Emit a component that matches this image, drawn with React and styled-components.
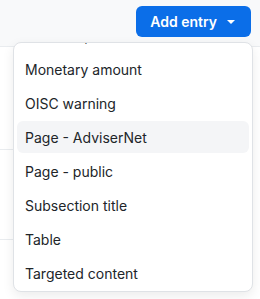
import React, { useEffect, useRef } from "react";
import styled, { createGlobalStyle } from "styled-components";

const GlobalStyle = createGlobalStyle`
  html, body {
    margin: 0;
    padding: 0;
    background: #ffffff;
    font-family: Inter, "Noto Sans", sans-serif;
    color: #212529;
  }
`;

const Page = styled.div`
  position: relative;
  width: 260px;
  height: 299px;
  overflow: hidden;
  background: #ffffff;
`;

const Header = styled.div`
  height: 47px;
  display: flex;
  justify-content: flex-end;
  align-items: flex-start;
  padding: 6px 9px 0 0;
  box-sizing: border-box;
  background: #f8f9fa;
  border-bottom: 1px solid #e9ecef;
`;

const AddButton = styled.button`
  display: flex;
  align-items: center;
  gap: 10px;
  height: 31px;
  padding: 0 16px 0 14px;
  border: none;
  border-radius: 6px;
  background: #0b6ee8;
  color: #ffffff;
  font-family: Inter, "Noto Sans", sans-serif;
  font-size: 14px;
  font-weight: 600;
  cursor: pointer;
`;

const Caret = styled.span`
  width: 0;
  height: 0;
  border-left: 4px solid transparent;
  border-right: 4px solid transparent;
  border-top: 4px solid #ffffff;
  margin-top: 1px;
`;

const Row = styled.div`
  height: ${(p) => p.h}px;
  margin-right: 12px;
  border-bottom: 1px solid #e9ecef;
  box-sizing: border-box;
`;

const Menu = styled.div`
  position: absolute;
  top: 42px;
  left: 13px;
  width: 240px;
  height: 250px;
  box-sizing: border-box;
  background: #ffffff;
  border: 1px solid #dfe2e6;
  border-radius: 8px;
  box-shadow: 0 4px 12px rgba(0, 0, 0, 0.08);
  overflow: hidden;
`;

const List = styled.div`
  display: flex;
  flex-direction: column;
  gap: 2px;
  padding: 4px 3px 2px;
`;

const Item = styled.div`
  height: 32px;
  flex-shrink: 0;
  display: flex;
  align-items: center;
  padding: 0 8px;
  border-radius: 6px;
  font-size: 14px;
  color: #212529;
  background: ${(p) => (p.$active ? "#f4f5f7" : "transparent")};
`;

const items = [
  "Inline steps",
  "Monetary amount",
  "OISC warning",
  "Page - AdviserNet",
  "Page - public",
  "Subsection title",
  "Table",
  "Targeted content",
];

export default function App() {
  const menuRef = useRef(null);

  useEffect(() => {
    if (menuRef.current) {
      menuRef.current.scrollTop = menuRef.current.scrollHeight;
    }
  }, []);

  return (
    <Page>
      <GlobalStyle />
      <Header>
        <AddButton>
          Add entry
          <Caret />
        </AddButton>
      </Header>
      <Row h={103} />
      <Row h={90} />
      <Menu ref={menuRef}>
        <List>
          {items.map((name) => (
            <Item key={name} $active={name === "Page - AdviserNet"}>
              {name}
            </Item>
          ))}
        </List>
      </Menu>
    </Page>
  );
}
